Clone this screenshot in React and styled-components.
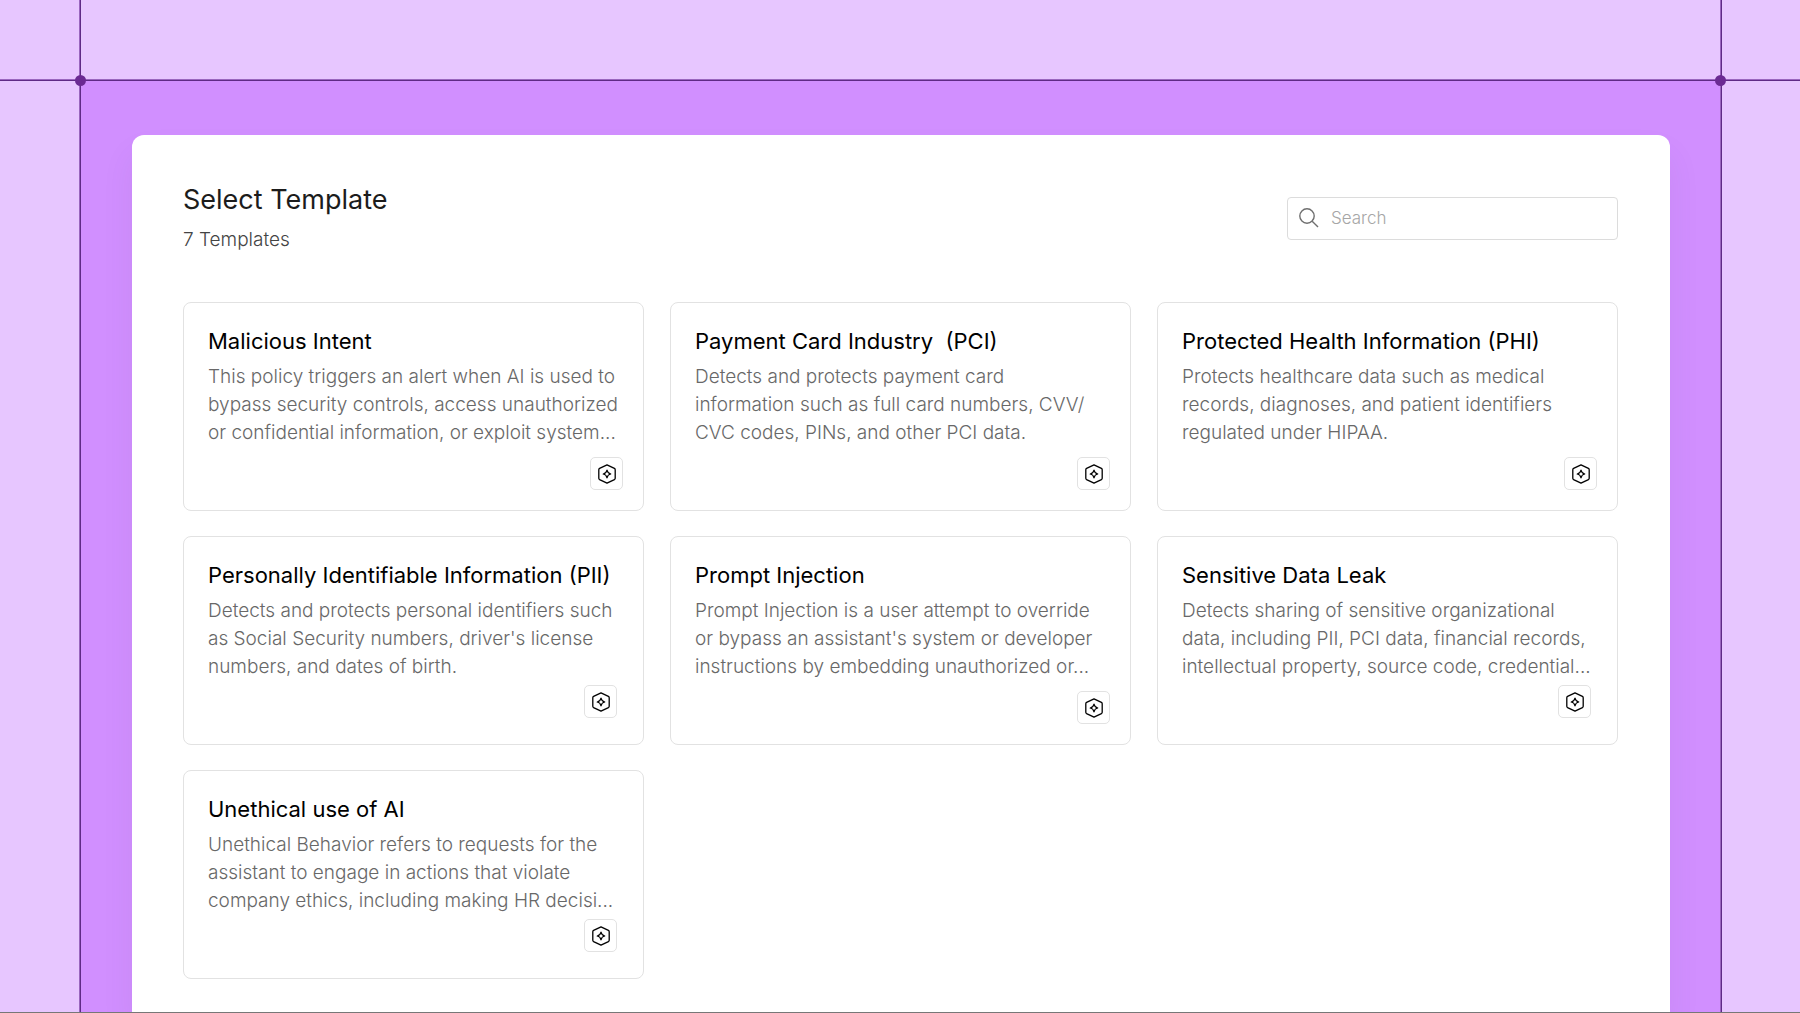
import React from 'react';
import styled, { createGlobalStyle, ThemeProvider } from 'styled-components';

const theme = {
  font: "Inter, 'Liberation Sans', sans-serif",
  colors: {
    lilac: '#e7c6ff',
    purple: '#d18fff',
    guide: '#5f2a86',
    guideEdge: '#9a66bf',
    dot: '#6b2a93',
    ink: '#000000',
    heading: '#1c1c1c',
    subtle: '#444444',
    body: '#686868',
    placeholder: '#a6a6a6',
    border: '#e2e2e2',
    white: '#ffffff',
  },
};

const GlobalStyle = createGlobalStyle`
  *, *::before, *::after {
    box-sizing: border-box;
  }

  body {
    margin: 0;
    background-color: ${theme.colors.lilac};
    font-family: ${theme.font};
  }

  h1, h2, p {
    margin: 0;
  }
`;

const Page = styled.div`
  position: relative;
  min-height: 100vh;
  padding: 80px 79px 0 80px;
  display: flex;
  overflow: hidden;
  border-bottom: 1px solid #777777;
`;

const Frame = styled.div`
  flex: 1;
  display: flex;
  padding: 55px 51px 0 52px;
  background-color: ${({ theme }) => theme.colors.purple};
`;

const Panel = styled.main`
  flex: 1;
  padding: 48px 52px 31px 51px;
  background-color: ${({ theme }) => theme.colors.white};
  border-radius: 12px 12px 0 0;
  box-shadow: 0 20px 32px rgba(90, 60, 120, 0.08);
`;

// Guide lines run past the frame to the edges of the page
const GuideRow = styled.div`
  position: absolute;
  top: 79px;
  left: 0;
  right: 0;
  height: 2px;
  background-color: ${({ theme }) => theme.colors.guide};
  border-top: 1px solid ${({ theme }) => theme.colors.guideEdge};
`;

const GuideColumn = styled.div`
  position: absolute;
  top: 0;
  bottom: 0;
  ${({ $side }) => ($side === 'left' ? 'left: 79px' : 'right: 78px')};
  width: 2px;
  background-color: ${({ theme }) => theme.colors.guide};
  border-left: 1px solid ${({ theme }) => theme.colors.guideEdge};
`;

const GuideDot = styled.div`
  position: absolute;
  top: 75px;
  ${({ $side }) => ($side === 'left' ? 'left: 75px' : 'right: 74px')};
  width: 11px;
  height: 11px;
  border-radius: 50%;
  background-color: ${({ theme }) => theme.colors.dot};
`;

const Header = styled.header`
  display: flex;
  justify-content: space-between;
  align-items: center;
  margin-bottom: 49px;
`;

const Title = styled.h1`
  font-weight: 400;
  font-size: 27px;
  line-height: 34px;
  color: ${({ theme }) => theme.colors.heading};
`;

const Count = styled.p`
  margin-top: 10px;
  font-weight: 300;
  font-size: 19px;
  line-height: 26px;
  color: ${({ theme }) => theme.colors.subtle};
`;

const SearchBox = styled.label`
  display: flex;
  align-items: center;
  gap: 12px;
  width: 331px;
  height: 43px;
  padding: 0 11px;
  color: #6f6f6f;
  border: 1px solid #dcdcdc;
  border-radius: 4px;
`;

const SearchInput = styled.input`
  flex: 1;
  min-width: 0;
  padding: 0;
  font-family: inherit;
  font-weight: 300;
  font-size: 17px;
  line-height: 24px;
  color: ${({ theme }) => theme.colors.ink};
  background: none;
  border: 0;
  outline: 0;

  &::placeholder {
    color: ${({ theme }) => theme.colors.placeholder};
  }
`;

const TemplateGrid = styled.section`
  display: grid;
  grid-template-columns: repeat(3, 1fr);
  grid-auto-rows: minmax(209px, auto);
  gap: 25px 26px;
`;

const Card = styled.article`
  display: flex;
  flex-direction: column;
  border: 1px solid ${({ theme }) => theme.colors.border};
  border-radius: 8px;
`;

const CardBody = styled.div`
  padding: 24px 22px 0 24px;
`;

const CardTitle = styled.h2`
  margin-bottom: 8px;
  font-weight: 400;
  font-size: 22px;
  line-height: 28px;
  white-space: pre-wrap;
  color: ${({ theme }) => theme.colors.ink};
`;

const CardText = styled.p`
  font-weight: 300;
  font-size: 19px;
  line-height: 28px;
  color: ${({ theme }) => theme.colors.body};
`;

const CardFooter = styled.div`
  display: flex;
  justify-content: flex-end;
  margin-top: auto;
  padding: 0 ${({ $inset }) => $inset}px ${({ $inset }) => $inset}px 0;
`;

const Badge = styled.span`
  display: flex;
  align-items: center;
  justify-content: center;
  width: 33px;
  height: 33px;
  color: ${({ theme }) => theme.colors.ink};
  border: 1px solid ${({ theme }) => theme.colors.border};
  border-radius: 5px;
`;

const templates = [
  {
    title: 'Malicious Intent',
    text: 'This policy triggers an alert when AI is used to bypass security controls, access unauthorized or confidential information, or exploit system...',
    inset: 20,
  },
  {
    title: 'Payment Card Industry  (PCI)',
    text: (
      <>
        Detects and protects payment card information such as full card numbers, CVV/
        <wbr />
        CVC codes, PINs, and other PCI data.
      </>
    ),
    inset: 20,
  },
  {
    title: 'Protected Health Information (PHI)',
    text: 'Protects healthcare data such as medical records, diagnoses, and patient identifiers regulated under HIPAA.',
    inset: 20,
  },
  {
    title: 'Personally Identifiable Information (PII)',
    text: "Detects and protects personal identifiers such as Social Security numbers, driver's license numbers, and dates of birth.",
    inset: 26,
  },
  {
    title: 'Prompt Injection',
    text: "Prompt Injection is a user attempt to override or bypass an assistant's system or developer instructions by embedding unauthorized or...",
    inset: 20,
  },
  {
    title: 'Sensitive Data Leak',
    text: 'Detects sharing of sensitive organizational data, including PII, PCI data, financial records, intellectual property, source code, credential...',
    inset: 26,
  },
  {
    title: 'Unethical use of AI',
    text: 'Unethical Behavior refers to requests for the assistant to engage in actions that violate company ethics, including making HR decisi...',
    inset: 26,
  },
];

function SearchIcon() {
  return (
    <svg width="20" height="20" viewBox="0 0 20 20" fill="none" aria-hidden="true">
      <circle cx="8" cy="8" r="7.2" stroke="currentColor" strokeWidth="1.4" />
      <path d="M13.2 13.2L19 19" stroke="currentColor" strokeWidth="1.4" />
    </svg>
  );
}

function SparkHexIcon() {
  return (
    <svg width="20" height="20" viewBox="0 0 20 20" fill="none" aria-hidden="true">
      <path
        d="M10 0.9L17.4 4.4Q18.2 4.9 18.2 5.8V14.2Q18.2 15.1 17.4 15.6L10 19.1L2.6 15.6Q1.8 15.1 1.8 14.2V5.8Q1.8 4.9 2.6 4.4Z"
        stroke="currentColor"
        strokeWidth="1.3"
        strokeLinejoin="round"
      />
      <path
        d="M10 6.2Q10.6 9.4 13.8 10Q10.6 10.6 10 13.8Q9.4 10.6 6.2 10Q9.4 9.4 10 6.2Z"
        stroke="currentColor"
        strokeWidth="1.2"
        strokeLinejoin="round"
      />
    </svg>
  );
}

function TemplateCard({ title, text, inset }) {
  return (
    <Card>
      <CardBody>
        <CardTitle>{title}</CardTitle>
        <CardText>{text}</CardText>
      </CardBody>
      <CardFooter $inset={inset}>
        <Badge>
          <SparkHexIcon />
        </Badge>
      </CardFooter>
    </Card>
  );
}

export default function App() {
  return (
    <ThemeProvider theme={theme}>
      <GlobalStyle />
      <Page>
        <Frame>
          <Panel>
            <Header>
              <div>
                <Title>Select Template</Title>
                <Count>{templates.length} Templates</Count>
              </div>
              <SearchBox htmlFor="template-search">
                <SearchIcon />
                <SearchInput
                  id="template-search"
                  type="text"
                  placeholder="Search"
                  aria-label="Search"
                />
              </SearchBox>
            </Header>
            <TemplateGrid>
              {templates.map((template) => (
                <TemplateCard key={template.title} {...template} />
              ))}
            </TemplateGrid>
          </Panel>
        </Frame>
        <GuideRow />
        <GuideColumn $side="left" />
        <GuideColumn $side="right" />
        <GuideDot $side="left" />
        <GuideDot $side="right" />
      </Page>
    </ThemeProvider>
  );
}
